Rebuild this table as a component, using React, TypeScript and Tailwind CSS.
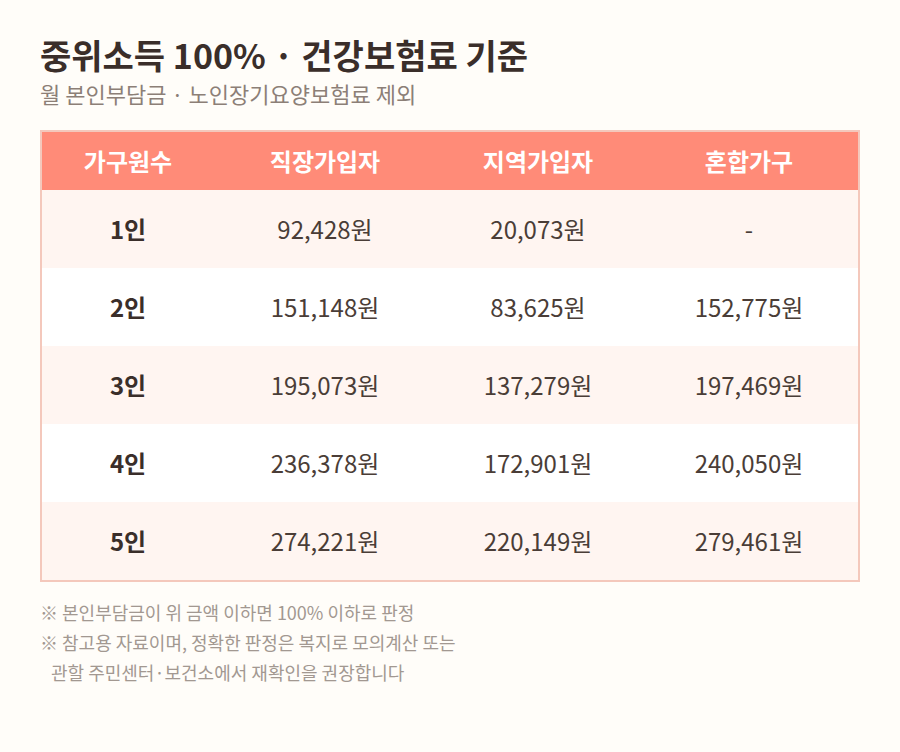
const ROWS: { label: string; work: string; local: string; mixed: string }[] = [
  { label: "1인", work: "92,428원", local: "20,073원", mixed: "-" },
  { label: "2인", work: "151,148원", local: "83,625원", mixed: "152,775원" },
  { label: "3인", work: "195,073원", local: "137,279원", mixed: "197,469원" },
  { label: "4인", work: "236,378원", local: "172,901원", mixed: "240,050원" },
  { label: "5인", work: "274,221원", local: "220,149원", mixed: "279,461원" },
];

const COLS = "grid grid-cols-[172px_222px_204px_1fr]";

export default function App() {
  return (
    <div
      className="h-[752px] w-[900px] bg-[#fffdf9] px-[40px] pt-[35px]"
      style={{ fontFamily: '"Noto Sans CJK KR", "Noto Sans", sans-serif' }}
    >
      {/* Title */}
      <h1 className="text-[34px] font-bold leading-[40px] text-[#3a2e2a]">
        중위소득 100% · 건강보험료 기준
      </h1>
      <p className="mt-[3px] text-[22px] leading-[30px] text-[#8c7f77]">월 본인부담금 · 노인장기요양보험료 제외</p>

      {/* Table */}
      <div className="mt-[22px] border-2 border-[#f4c8bc]">
        <div className={`${COLS} h-[58px] items-center bg-[#ff8b78] text-center text-[24px] font-bold text-white`}>
          <div>가구원수</div>
          <div>직장가입자</div>
          <div>지역가입자</div>
          <div>혼합가구</div>
        </div>
        {ROWS.map((r, i) => (
          <div
            key={r.label}
            className={`${COLS} h-[78px] items-center text-center text-[24px] text-[#4a3d37] ${
              i % 2 === 0 ? "bg-[#fff5f1]" : "bg-white"
            }`}
          >
            <div className="font-bold text-[#3a2e2a]">{r.label}</div>
            <div>{r.work}</div>
            <div>{r.local}</div>
            <div>{r.mixed}</div>
          </div>
        ))}
      </div>

      {/* Notes */}
      <div className="mt-[15px] text-[18px] leading-[30px] text-[#a29891]">
        <p>※ 본인부담금이 위 금액 이하면 100% 이하로 판정</p>
        <p>※ 참고용 자료이며, 정확한 판정은 복지로 모의계산 또는</p>
        <p className="pl-[11px]">관할 주민센터·보건소에서 재확인을 권장합니다</p>
      </div>
    </div>
  );
}
